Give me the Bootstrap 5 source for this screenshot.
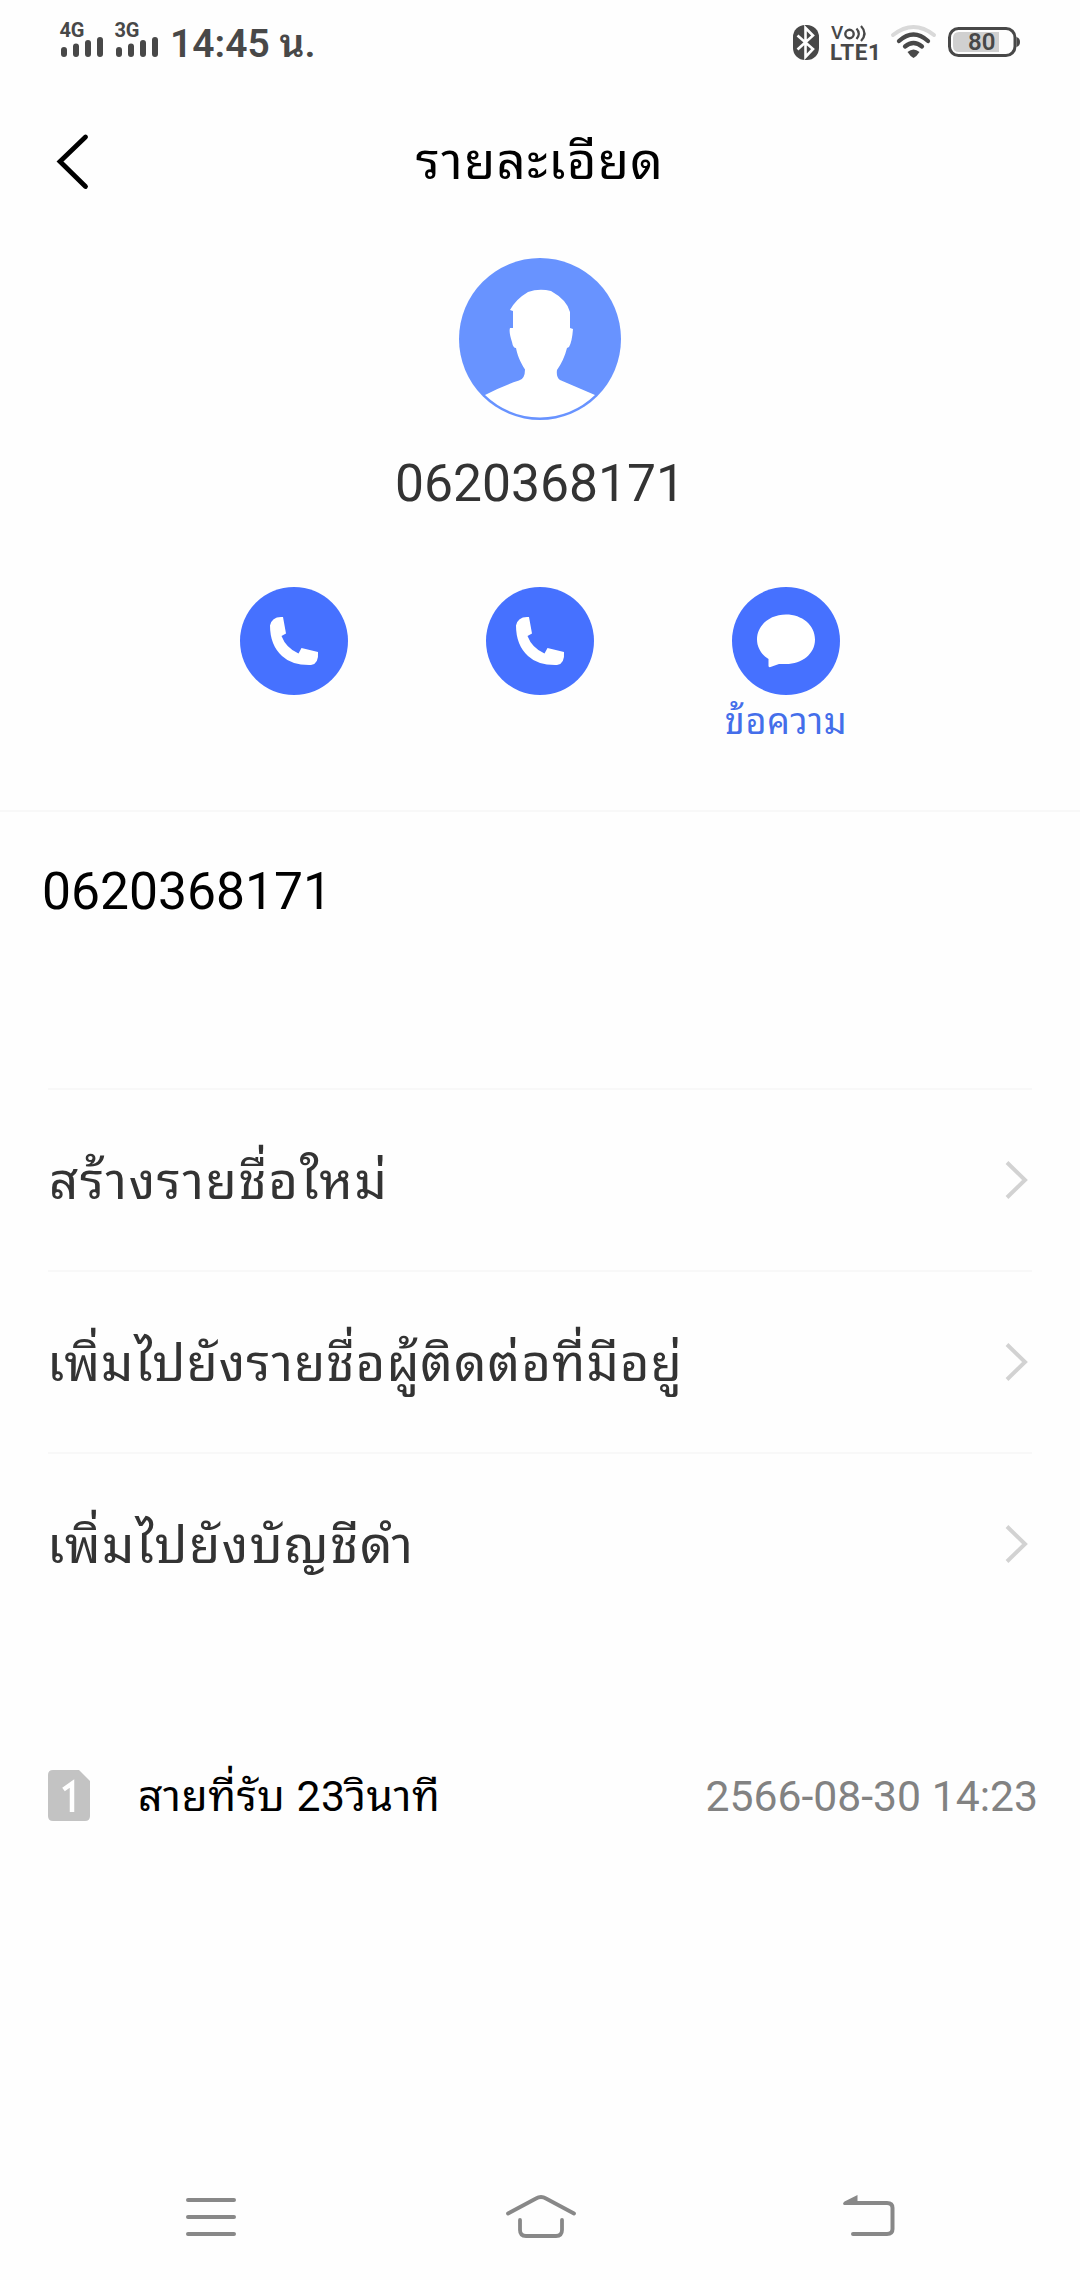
<!DOCTYPE html>
<html lang="th">
<head>
<meta charset="utf-8">
<meta name="viewport" content="width=device-width, initial-scale=1">
<title>รายละเอียด</title>
<link href="https://cdn.jsdelivr.net/npm/bootstrap@5.3.0/dist/css/bootstrap.min.css" rel="stylesheet">
<style>
body{font-family:Roboto,"Noto Sans Thai Looped","Noto Looped Thai",Loma,Garuda,Waree,"Noto Sans Thai","Noto Sans",sans-serif;background:#fefefe;color:#000;width:1080px;height:2280px;overflow:hidden}
svg{display:block;flex:none;overflow:visible}
.phone{height:2280px}
.statusbar{height:84px;color:#484848}
.st-left{padding-left:60px}
.sig{width:44px;height:36px;margin-right:11px}
.sig text,.sysicons text{font-family:Roboto,sans-serif;fill:#484848}
.clock{font-size:39px;line-height:60px;font-weight:600;padding-top:14px}
.topbar{height:156px}
.topbar h1{font-size:51px;line-height:60px;font-weight:400;margin:0;padding-top:48px;letter-spacing:1.25px}
.back{left:56px;top:48px}
.profile{height:570px;padding-top:18px}
.who{font-size:51.6px;line-height:60px;color:#333;margin-top:34px}
.acts{gap:138px;margin-top:73px}
.act{width:108px}
.act span{font-size:36px;line-height:40px;color:#446eea;white-space:nowrap;margin-top:7px;letter-spacing:.7px}
.numrow{height:280px;border-top:2px solid #f8f8f8;padding:50px 0 0 42px;font-size:51.6px;line-height:60px}
.opts{margin:-2px 48px 0}
.opts .opt{height:182px;border:0;border-top:2px solid #f8f8f8;border-radius:0;background:none;padding:4px 1px 0;color:#333;font-size:51px;line-height:60px}
.opt svg{margin-right:2px;margin-top:-4px}
.opt-new{letter-spacing:1.6px}
.opt-existing{letter-spacing:1.02px;margin-left:-2px}
.opt-block{letter-spacing:1.5px;margin-left:-2px}
.log{padding:0 42px 0 48px;margin-top:126px;height:70px;font-size:42.7px}
.log .desc{margin-left:48px;padding-top:3px;letter-spacing:.5px}
.log .when{color:#828282;padding-top:3px}
.nav-sys{height:90px}
</style>
<script src="https://cdn.jsdelivr.net/npm/bootstrap@5.3.0/dist/js/bootstrap.bundle.min.js"></script>
</head>
<body>
<div class="phone d-flex flex-column">
  <header class="statusbar d-flex justify-content-between">
    <div class="st-left d-flex align-items-start">
      <svg class="sig mt-4" viewBox="0 24 44 36"><text x="-.5" y="36.500" font-size="20" font-weight="700" textLength="25">4G</text><path d="M4 50v4M16 46.500v7.500M28 43v11M40 40v14" stroke="#484848" stroke-width="6" stroke-linecap="round"/></svg>
      <svg class="sig mt-4" viewBox="0 24 44 36"><text x="-.5" y="36.500" font-size="20" font-weight="700" textLength="25">3G</text><path d="M4 50v4M16 46.500v7.500M28 43v11M40 40v14" stroke="#484848" stroke-width="6" stroke-linecap="round"/></svg>
      <div class="clock">14:45 <span>น.</span></div>
    </div>
    <svg class="sysicons" width="290" height="84" viewBox="790 0 290 84">
      <rect x="793" y="25" width="26" height="35" rx="12" fill="#484848"/>
      <path d="M797.500 35.500L813 49l-7.500 8V28l7.500 7.500-15.500 14" fill="none" stroke="#fefefe" stroke-width="2.600"/>
      <text x="831" y="39" font-size="19" font-weight="500">V</text><circle cx="849.500" cy="34" r="4.200" fill="none" stroke="#484848" stroke-width="2.400"/>
      <path d="M856.500 28.500q4.500 5 0 10.500M861 26q7 7.500 0 15" fill="none" stroke="#484848" stroke-width="2.200"/>
      <text x="830" y="60" font-size="22.500" font-weight="700" textLength="51">LTE1</text>
      <g fill="none" stroke-linecap="round"><path d="M893 35Q913.500 19 934 35" stroke="#d9d9d9" stroke-width="4"/><path d="M899 41Q913.500 28 928 41M905 46.500Q913.500 39.500 922 46.500" stroke="#484848" stroke-width="4.300"/></g>
      <path d="M907.500 52Q913.500 47 919.500 52 917 56 913.500 58 910 56 907.500 52Z" fill="#484848"/>
      <path d="M959 32h40v20h-40q-6 0-6-6v-8q0-6 6-6z" fill="#d0d0d0"/>
      <rect x="949.500" y="28.500" width="65.500" height="27" rx="9" fill="none" stroke="#484848" stroke-width="3"/>
      <path d="M1016.500 37q3.500 1 3.500 5t-3.500 5z" fill="#484848"/>
      <text x="968" y="50" font-size="24" font-weight="600" textLength="27.500">80</text>
    </svg>
  </header>
  <div class="topbar position-relative text-center">
    <svg class="back position-absolute" width="34" height="60" viewBox="56 132 34 60"><path d="M85.500 137L60 161.500l25.500 25" fill="none" stroke="#000" stroke-width="4.800" stroke-linecap="round" stroke-linejoin="miter"/></svg>
    <h1>รายละเอียด</h1>
  </div>
  <section class="profile d-flex flex-column align-items-center">
    <svg width="162" height="162" viewBox="0 0 162 162"><circle cx="81" cy="81" r="81" fill="#6893ff"/><path d="M26 137Q43 128 60 122.500 66 121 66 111.500C61 104 58 96 57 90Q54 90 53 84C51 78 50 73 51 70L54 70V53L51 52Q57 41 69 34 80 30 92 33 108 42 111 54V70L114 71Q113 84 110 89L108 90Q105 102 98 112 97 119 101 122L136 137Q113 159 81 159.500 49 159 26 137Z" fill="#fff"/></svg>
    <div class="who">0620368171</div>
    <div class="acts d-flex">
      <div class="act"><svg width="108" height="108" viewBox="0 0 108 108"><circle cx="54" cy="54" r="54" fill="#4671ff"/><path d="M43 30L46 46.500 41.500 49Q46 61 58.500 66.500L61.500 61 78 65Q79 77 71 78 52 78.500 42 69 30 58 30 38.500 32 29 43 30Z" fill="#fff"/></svg></div>
      <div class="act"><svg width="108" height="108" viewBox="0 0 108 108"><circle cx="54" cy="54" r="54" fill="#4671ff"/><path d="M43 30L46 46.500 41.500 49Q46 61 58.500 66.500L61.500 61 78 65Q79 77 71 78 52 78.500 42 69 30 58 30 38.500 32 29 43 30Z" fill="#fff"/></svg></div>
      <div class="act d-flex flex-column align-items-center"><svg width="108" height="108" viewBox="0 0 108 108"><circle cx="54" cy="54" r="54" fill="#4671ff"/><path d="M54 27.500C70 27.500 83 38 83 52.500S70 77 54 77L47 77 38.500 80Q36.500 80.500 36.500 79V72C30 68 25 61 25 52.500 25 38 38 27.500 54 27.500Z" fill="#fff"/></svg><span>ข้อความ</span></div>
    </div>
  </section>
  <div class="numrow">0620368171</div>
  <div class="opts list-group list-group-flush">
    <a class="opt list-group-item d-flex justify-content-between align-items-center"><span class="opt-new">สร้างรายชื่อใหม่</span><svg width="26" height="44" viewBox="0 0 26 44"><path d="M4 4.500L22 22 4 39.500" fill="none" stroke="#d2d2d2" stroke-width="4"/></svg></a>
    <a class="opt list-group-item d-flex justify-content-between align-items-center"><span class="opt-existing">เพิ่มไปยังรายชื่อผู้ติดต่อที่มีอยู่</span><svg width="26" height="44" viewBox="0 0 26 44"><path d="M4 4.500L22 22 4 39.500" fill="none" stroke="#d2d2d2" stroke-width="4"/></svg></a>
    <a class="opt list-group-item d-flex justify-content-between align-items-center"><span class="opt-block">เพิ่มไปยังบัญชีดำ</span><svg width="26" height="44" viewBox="0 0 26 44"><path d="M4 4.500L22 22 4 39.500" fill="none" stroke="#d2d2d2" stroke-width="4"/></svg></a>
  </div>
  <div class="log d-flex align-items-center">
    <svg width="42" height="51" viewBox="0 0 42 51"><path d="M5 0H31L42 11V46q0 5-5 5H5q-5 0-5-5V5Q0 0 5 0Z" fill="#c3c3c3"/><path d="M15.500 19.500L24 13.500V42" fill="none" stroke="#fff" stroke-width="4.500"/></svg>
    <span class="desc">สายที่รับ 23วินาที</span>
    <span class="when ms-auto">2566-08-30 14:23</span>
  </div>
  <footer class="nav-sys mt-auto">
    <svg width="1080" height="90" viewBox="0 2190 1080 90" fill="none" stroke="#888" stroke-width="4" stroke-linecap="round"><path d="M188 2200h46M188 2217h46M188 2234h46"/><path d="M508 2213.500L536 2198.500Q541 2195.500 546 2198.500L574 2213.500M520 2220v10q0 6 6 6h30q6 0 6-6v-10" stroke-width="3.800"/><path d="M850 2203h37q5.500 0 5.500 5v21q0 5-5.500 5H853"/><path d="M843 2204Q843 2202.500 844.500 2201.500L857.500 2195V2205H844Z" fill="#888" stroke="none"/></svg>
  </footer>
</div>
</body>
</html>
